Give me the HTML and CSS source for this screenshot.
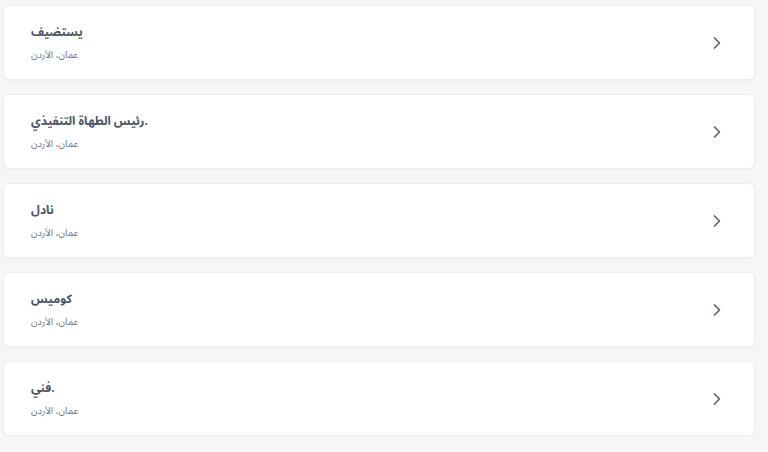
FILE: index.html
```html
<!DOCTYPE html>
<html lang="ar">
<head>
<meta charset="utf-8">
<link rel="stylesheet" href="styles.css">
</head>
<body>
<ul class="list">
  <li class="card">
    <div class="info"><div class="title">يستضيف</div><div class="sub">عمان، الأردن</div></div>
    <svg class="chev" viewBox="0 0 10 14" width="10" height="14"><path d="M2.5 2 L7.5 7 L2.5 12" fill="none" stroke="#5b6370" stroke-width="1.7" stroke-linecap="round" stroke-linejoin="round"/></svg>
  </li>
  <li class="card">
    <div class="info"><div class="title">رئيس الطهاة التنفيذي.</div><div class="sub">عمان، الأردن</div></div>
    <svg class="chev" viewBox="0 0 10 14" width="10" height="14"><path d="M2.5 2 L7.5 7 L2.5 12" fill="none" stroke="#5b6370" stroke-width="1.7" stroke-linecap="round" stroke-linejoin="round"/></svg>
  </li>
  <li class="card">
    <div class="info"><div class="title">نادل</div><div class="sub">عمان، الأردن</div></div>
    <svg class="chev" viewBox="0 0 10 14" width="10" height="14"><path d="M2.5 2 L7.5 7 L2.5 12" fill="none" stroke="#5b6370" stroke-width="1.7" stroke-linecap="round" stroke-linejoin="round"/></svg>
  </li>
  <li class="card">
    <div class="info"><div class="title">كوميس</div><div class="sub">عمان، الأردن</div></div>
    <svg class="chev" viewBox="0 0 10 14" width="10" height="14"><path d="M2.5 2 L7.5 7 L2.5 12" fill="none" stroke="#5b6370" stroke-width="1.7" stroke-linecap="round" stroke-linejoin="round"/></svg>
  </li>
  <li class="card">
    <div class="info"><div class="title">فني.</div><div class="sub">عمان، الأردن</div></div>
    <svg class="chev" viewBox="0 0 10 14" width="10" height="14"><path d="M2.5 2 L7.5 7 L2.5 12" fill="none" stroke="#5b6370" stroke-width="1.7" stroke-linecap="round" stroke-linejoin="round"/></svg>
  </li>
</ul>
</body>
</html>
```
FILE: styles.css
```css
html, body {
  margin: 0;
  padding: 0;
  background: #f5f6f8;
  font-family: "Noto Sans Arabic", "Liberation Sans", sans-serif;
}
.list {
  list-style: none;
  margin: 0;
  padding: 5px 13px 0 3px;
  display: flex;
  flex-direction: column;
  gap: 14px;
}
.card {
  height: 75px;
  box-sizing: border-box;
  background: #fff;
  border: 1px solid #eceef1;
  border-radius: 6px;
  box-shadow: 0 1px 2px rgba(0,0,0,0.04);
  display: flex;
  align-items: center;
  justify-content: space-between;
  padding: 0 32px 0 27px;
}
.info {
  display: flex;
  flex-direction: column;
  align-items: flex-start;
  gap: 8px;
}
.title {
  font-size: 12px;
  font-weight: 700;
  color: #4b5563;
  line-height: 17px;
}
.sub {
  font-size: 9.5px;
  color: #6b7280;
  line-height: 13px;
}
.chev {
  display: block;
}
```
